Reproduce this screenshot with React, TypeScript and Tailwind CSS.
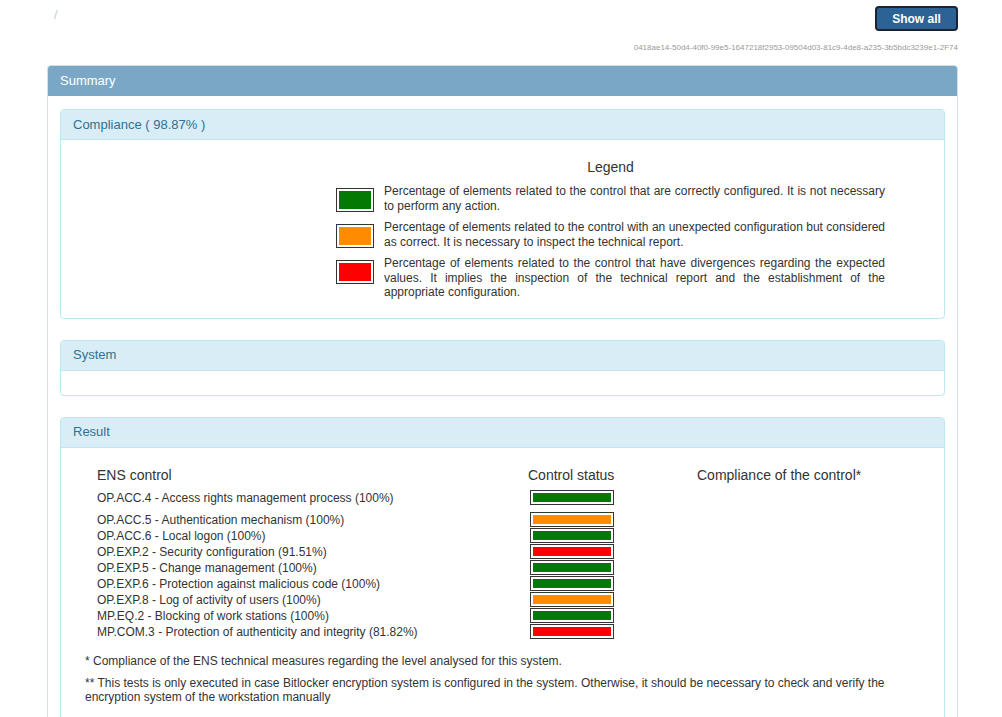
import React from 'react';

type Status = 'ok' | 'warn' | 'bad';

const colors: Record<Status, string> = {
  ok: 'bg-[#047a04]',
  warn: 'bg-[#ff8c00]',
  bad: 'bg-[#ff0000]',
};

const controls: { label: string; status: Status }[] = [
  { label: 'OP.ACC.4 - Access rights management process (100%)', status: 'ok' },
  { label: 'OP.ACC.5 - Authentication mechanism (100%)', status: 'warn' },
  { label: 'OP.ACC.6 - Local logon (100%)', status: 'ok' },
  { label: 'OP.EXP.2 - Security configuration (91.51%)', status: 'bad' },
  { label: 'OP.EXP.5 - Change management (100%)', status: 'ok' },
  { label: 'OP.EXP.6 - Protection against malicious code (100%)', status: 'ok' },
  { label: 'OP.EXP.8 - Log of activity of users (100%)', status: 'warn' },
  { label: 'MP.EQ.2 - Blocking of work stations (100%)', status: 'ok' },
  { label: 'MP.COM.3 - Protection of authenticity and integrity (81.82%)', status: 'bad' },
];

const legend: { status: Status; text: string }[] = [
  {
    status: 'ok',
    text: 'Percentage of elements related to the control that are correctly configured. It is not necessary to perform any action.',
  },
  {
    status: 'warn',
    text: 'Percentage of elements related to the control with an unexpected configuration but considered as correct. It is necessary to inspect the technical report.',
  },
  {
    status: 'bad',
    text: 'Percentage of elements related to the control that have divergences regarding the expected values. It implies the inspection of the technical report and the establishment of the appropriate configuration.',
  },
];

const InfoPanel: React.FC<{ title: string; children?: React.ReactNode; bodyClass?: string }> = ({
  title,
  children,
  bodyClass,
}) => (
  <div className="rounded-[4px] border border-[#bce8f1] bg-white">
    <div className="h-[30px] flex items-center px-[12px] bg-[#d9edf7] border-b border-[#bce8f1] rounded-t-[3px] text-[13px] text-[#31708f]">
      {title}
    </div>
    <div className={bodyClass}>{children}</div>
  </div>
);

const StatusBar: React.FC<{ status: Status }> = ({ status }) => (
  <div className="w-[84px] h-[15px] border border-[#333] bg-white p-[2px]">
    <div className={`w-full h-full ${colors[status]}`} />
  </div>
);

export default function App() {
  return (
    <div className="min-h-screen bg-white text-[#333] font-['Liberation_Sans',Arial,sans-serif]">
      <div className="ml-[47px] mr-[44px] pt-[6px]">
        <div className="flex items-start justify-between">
          <span className="ml-[7px] mt-[-1px] text-[13px] text-[#ccc]">/</span>
          <button className="w-[83px] h-[25px] rounded-[4px] border-2 border-[#1b2430] bg-[#2c6294] text-white text-[12px] font-bold">
            Show all
          </button>
        </div>
        <div className="mt-[12px] text-right text-[8px] leading-[10px] text-[#999]">
          0418ae14-50d4-40f0-99e5-1647218f2953-09504d03-81c9-4de8-a235-3b5bdc3239e1-2F74
        </div>

        <div className="mt-[12px] rounded-t-[4px] border border-[#d6dee5] border-b-0">
          <div className="h-[30px] flex items-center px-[12px] bg-[#7ba7c7] rounded-t-[3px] text-[13px] text-white">
            Summary
          </div>
          <div className="px-[12px] pt-[13px] pb-[40px] flex flex-col gap-[21px]">
            <InfoPanel title="Compliance ( 98.87% )" bodyClass="pt-[19px] pb-[18px]">
              <div className="ml-[275px] w-[549px]">
                <div className="text-center text-[14px] leading-[17px] mb-[8px]">Legend</div>
                <div className="flex flex-col gap-[7px]">
                  {legend.map((l) => (
                    <div key={l.status} className="flex items-start gap-[10px]">
                      <div className="mt-[4px] w-[38px] h-[24px] shrink-0 border border-[#333] bg-white p-[2px]">
                        <div className={`w-full h-full ${colors[l.status]}`} />
                      </div>
                      <p className="text-[12px] leading-[14.5px] text-justify">{l.text}</p>
                    </div>
                  ))}
                </div>
              </div>
            </InfoPanel>

            <InfoPanel title="System" bodyClass="h-[24px]" />

            <InfoPanel title="Result" bodyClass="pt-[19px] pb-[20px] px-[24px]">
              <div className="pl-[12px] grid grid-cols-[431px_169px_1fr] text-[14px] leading-[17px]">
                <div>ENS control</div>
                <div>Control status</div>
                <div>Compliance of the control*</div>
              </div>
              <div className="pl-[12px] mt-[5px] flex flex-col">
                {controls.map((c, i) => (
                  <div
                    key={c.label}
                    className={`grid grid-cols-[431px_169px_1fr] items-center h-[16px] text-[12px] ${
                      i === 0 ? 'mb-[6px]' : ''
                    }`}
                  >
                    <div className="whitespace-nowrap">{c.label}</div>
                    <div className="pl-[2px]">
                      <StatusBar status={c.status} />
                    </div>
                    <div />
                  </div>
                ))}
              </div>
              <div className="mt-[15px] text-[12px] leading-[14px]">
                * Compliance of the ENS technical measures regarding the level analysed for this system.
              </div>
              <div className="mt-[8px] text-[12px] leading-[14px]">
                ** This tests is only executed in case Bitlocker encryption system is configured in the system. Otherwise, it
                should be necessary to check and verify the encryption system of the workstation manually
              </div>
            </InfoPanel>
          </div>
        </div>
      </div>
    </div>
  );
}
